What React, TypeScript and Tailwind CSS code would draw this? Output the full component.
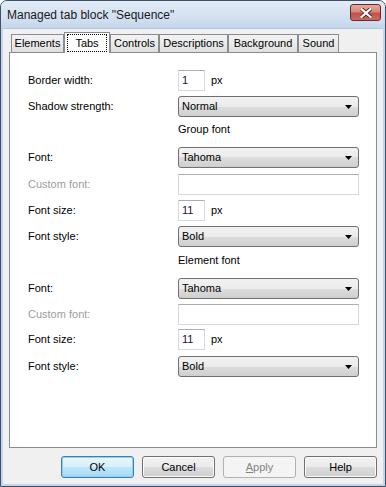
import React from "react";

const selectBg =
  "bg-[linear-gradient(to_bottom,#f2f2f2_0%,#ebebeb_50%,#dddddd_50%,#cfcfcf_100%)]";

function Arrow() {
  return (
    <svg width="7" height="4" viewBox="0 0 7 4" className="block">
      <path d="M0 0 H7 L3.5 4 Z" fill="#000" />
    </svg>
  );
}

function Select({ value }: { value: string }) {
  return (
    <div
      className={`w-[181px] h-[21px] rounded-[3px] border border-[#707070] ${selectBg} flex items-center pl-[3px] pr-[6px]`}
    >
      <span className="flex-1 text-black">{value}</span>
      <Arrow />
    </div>
  );
}

function SmallInput({ value }: { value: string }) {
  return (
    <div className="flex items-center">
      <div className="w-[27px] h-[21px] border border-[#d5d9df] border-t-[#abadb3] bg-white flex items-center pl-[3px] text-[#2a0a3a]">
        {value}
      </div>
      <span className="ml-[6px] text-black">px</span>
    </div>
  );
}

function WideInput() {
  return (
    <div className="w-[181px] h-[21px] border border-[#d5d9df] border-t-[#abadb3] bg-white" />
  );
}

function Row({
  label,
  disabled,
  mt,
  children,
}: {
  label: string;
  disabled?: boolean;
  mt: string;
  children: React.ReactNode;
}) {
  return (
    <div className={`flex items-center h-[21px] ${mt}`}>
      <div
        className={`w-[168px] shrink-0 pl-[18px] ${disabled ? "text-[#9d9d9d]" : "text-black"}`}
      >
        {label}
      </div>
      {children}
    </div>
  );
}

function Header({ text, mt }: { text: string; mt: string }) {
  return (
    <div className={`flex items-center h-[14px] ${mt}`}>
      <div className="w-[168px] shrink-0" />
      <span className="text-black">{text}</span>
    </div>
  );
}

function Tab({ label, w, selected }: { label: string; w: string; selected?: boolean }) {
  if (selected) {
    return (
      <div
        className={`${w} h-[21px] bg-white border border-b-0 border-[#898c95] flex items-start justify-center pt-[1px] px-[2px] relative z-10`}
      >
        <div className="w-full h-[18px] border border-dotted border-black flex items-center justify-center">
          {label}
        </div>
      </div>
    );
  }
  return (
    <div
      className={`${w} h-[18px] mb-[1px] border border-b-0 border-[#898c95] bg-[linear-gradient(to_bottom,#f3f3f3_0%,#ebebeb_50%,#dedede_100%)] flex items-center justify-center`}
    >
      {label}
    </div>
  );
}

function Button({
  children,
  variant,
}: {
  children: React.ReactNode;
  variant: "default" | "normal" | "disabled";
}) {
  const cls =
    variant === "default"
      ? "border-[#3c7fb1] bg-[linear-gradient(to_bottom,#e9f6fd_0%,#d8effc_50%,#bde6fd_50%,#a8d9f5_100%)] shadow-[inset_0_0_0_1px_#8ad3f5] text-black"
      : variant === "disabled"
      ? "border-[#adb2b5] bg-[#f4f4f4] text-[#838383]"
      : `border-[#707070] ${selectBg} shadow-[inset_0_0_0_1px_#fbfbfb] text-black`;
  return (
    <div
      className={`w-[73px] h-[22px] rounded-[3px] border flex items-center justify-center ${cls}`}
    >
      {children}
    </div>
  );
}

export default function App() {
  return (
    <div className="w-[386px] h-[487px] bg-white font-['Liberation_Sans',Arial,sans-serif] text-[11px] leading-none">
      <div className="w-[386px] h-[487px] border border-[#3d5068] rounded-t-[7px] bg-[#c3d5eb] flex flex-col overflow-hidden">
        {/* Title bar */}
        <div className="h-[27px] shrink-0 flex items-center pl-[6px] pr-[4px] bg-[linear-gradient(to_bottom,#e3ecf7_0%,#d2e0f1_60%,#c6d7ec_100%)]">
          <span className="text-[12px] text-[#1a1a1a]">Managed tab block "Sequence"</span>
          <div className="ml-auto mb-[4px] w-[31px] h-[17px] rounded-[3px] border border-[#6a2a2a] bg-[linear-gradient(to_bottom,#e7a899_0%,#d9877a_45%,#c4504a_55%,#c96a5e_100%)] flex items-center justify-center">
            <svg width="12" height="10" viewBox="0 0 12 10">
              <path
                d="M1.5 1 L10.5 9 M10.5 1 L1.5 9"
                stroke="#5a2222"
                strokeWidth="4"
                strokeLinecap="square"
              />
              <path
                d="M1.5 1 L10.5 9 M10.5 1 L1.5 9"
                stroke="#ffffff"
                strokeWidth="2.2"
                strokeLinecap="square"
              />
            </svg>
          </div>
        </div>

        {/* Client */}
        <div className="flex-1 mx-[2px] mb-[2px] bg-[#f0f0f0] flex flex-col pl-[6px] pr-[6px] pt-[3px] border-t border-[#b5c7dd]">
          {/* Tabs */}
          <div className="flex items-end h-[21px] -mb-[1px] pl-[2px] relative z-10">
            <Tab label="Elements" w="w-[53px]" />
            <Tab label="Tabs" w="w-[46px]" selected />
            <Tab label="Controls" w="w-[49px]" />
            <Tab label="Descriptions" w="w-[69px]" />
            <Tab label="Background" w="w-[70px]" />
            <Tab label="Sound" w="w-[41px]" />
          </div>

          {/* Panel */}
          <div className="h-[396px] bg-white border border-[#898c95] flex flex-col">
            <Row label="Border width:" mt="mt-[17px]">
              <SmallInput value="1" />
            </Row>
            <Row label="Shadow strength:" mt="mt-[5px]">
              <Select value="Normal" />
            </Row>
            <Header text="Group font" mt="mt-[5px]" />
            <Row label="Font:" mt="mt-[11px]">
              <Select value="Tahoma" />
            </Row>
            <Row label="Custom font:" disabled mt="mt-[6px]">
              <WideInput />
            </Row>
            <Row label="Font size:" mt="mt-[5px]">
              <SmallInput value="11" />
            </Row>
            <Row label="Font style:" mt="mt-[5px]">
              <Select value="Bold" />
            </Row>
            <Header text="Element font" mt="mt-[6px]" />
            <Row label="Font:" mt="mt-[11px]">
              <Select value="Tahoma" />
            </Row>
            <Row label="Custom font:" disabled mt="mt-[5px]">
              <WideInput />
            </Row>
            <Row label="Font size:" mt="mt-[4px]">
              <SmallInput value="11" />
            </Row>
            <Row label="Font style:" mt="mt-[6px]">
              <Select value="Bold" />
            </Row>
          </div>

          {/* Buttons */}
          <div className="flex justify-end gap-[8px] mt-[8px]">
            <Button variant="default">OK</Button>
            <Button variant="normal">Cancel</Button>
            <Button variant="disabled">
              <span>
                <span className="underline">A</span>pply
              </span>
            </Button>
            <Button variant="normal">Help</Button>
          </div>
        </div>
      </div>
    </div>
  );
}
